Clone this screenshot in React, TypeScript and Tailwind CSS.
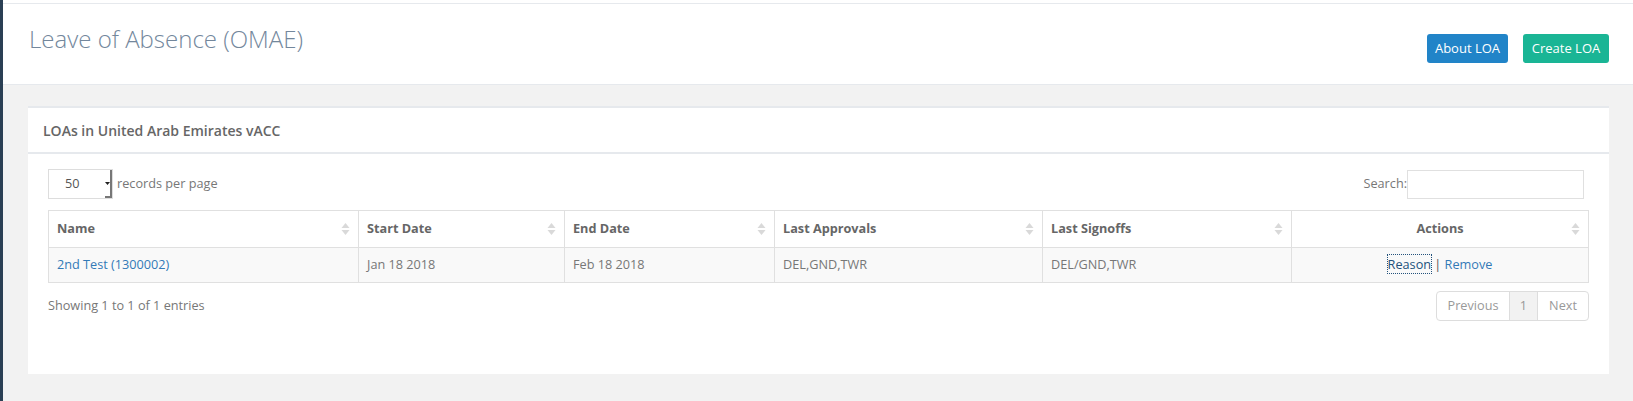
import React from "react";

const SortIcon = () => (
  <svg width="9" height="14" viewBox="0 0 9 14" className="shrink-0">
    <path d="M4.5 1 L8.5 6 L0.5 6 Z" fill="#d9d9d9" />
    <path d="M4.5 13 L8.5 8 L0.5 8 Z" fill="#d9d9d9" />
  </svg>
);

const columns = [
  { label: "Name", w: "w-[310px]" },
  { label: "Start Date", w: "w-[206px]" },
  { label: "End Date", w: "w-[210px]" },
  { label: "Last Approvals", w: "w-[268px]" },
  { label: "Last Signoffs", w: "w-[249px]" },
];

export default function App() {
  return (
    <div
      className="flex w-[1633px] h-[401px] bg-[#f2f2f2] text-[12.7px] text-[#777] overflow-hidden"
      style={{ fontFamily: '"Open Sans", "Liberation Sans", sans-serif' }}
    >
      <div className="w-[3px] bg-[#2A3F54] shrink-0" />
      <div className="flex-1 flex flex-col">
        <div className="h-[4px] bg-white border-b border-[#e6e9ed]" />
        <div className="h-[81px] bg-white border-b border-[#e6e9ed] flex justify-between pl-[26px] pr-[24px]">
          <h3 className="text-[24px] font-light text-[#73879C] mt-[18px] leading-[34px]">
            Leave of Absence (OMAE)
          </h3>
          <div className="flex gap-[15px] mt-[30px]">
            <button className="h-[29px] w-[81px] rounded-[3px] bg-[#2184c8] text-white text-[13px]">
              About LOA
            </button>
            <button className="h-[29px] w-[86px] rounded-[3px] bg-[#1ab595] text-white text-[13px]">
              Create LOA
            </button>
          </div>
        </div>
        <div className="pt-[21px] pl-[25px] pr-[24px]">
          <div className="bg-white border-t-2 border-[#E6E9ED] h-[268px]">
            <div className="h-[46px] border-b-2 border-[#E6E9ED] flex items-center pl-[15px]">
              <h2 className="text-[14px] font-semibold text-[#666]">
                LOAs in United Arab Emirates vACC
              </h2>
            </div>
            <div className="px-[20px] pt-[15px]">
              <div className="flex justify-between items-center">
                <div className="flex items-center">
                  <div className="relative w-[65px] h-[30px] border border-[#dddddd] flex items-center pl-[16px]">
                    <span className="text-[#555]">50</span>
                    <div className="absolute right-0 top-0 bottom-0 w-[7px] border-r-2 border-b-2 border-[#777] flex items-center justify-center">
                      <svg width="5" height="3" viewBox="0 0 5 3">
                        <path d="M0 0 L5 0 L2.5 3 Z" fill="#222" />
                      </svg>
                    </div>
                  </div>
                  <span className="ml-[4px]">records per page</span>
                </div>
                <div className="flex items-center pr-[5px]">
                  <span>Search:</span>
                  <div className="w-[177px] h-[29px] border border-[#e0e0e0]" />
                </div>
              </div>
              <table className="mt-[11px] border-collapse w-[1541px] table-fixed">
                <thead>
                  <tr className="h-[37px]">
                    {columns.map((c) => (
                      <th key={c.label} className={`${c.w} border border-[#e0e0e0] px-[8px] text-left font-bold text-[#666]`}>
                        <div className="flex items-center justify-between">
                          <span>{c.label}</span>
                          <SortIcon />
                        </div>
                      </th>
                    ))}
                    <th className="border border-[#e0e0e0] px-[8px] font-bold text-[#666]">
                      <div className="flex items-center justify-between">
                        <span className="w-[9px]" />
                        <span>Actions</span>
                        <SortIcon />
                      </div>
                    </th>
                  </tr>
                </thead>
                <tbody>
                  <tr className="h-[35px] bg-[#f9f9f9]">
                    <td className="border border-[#e0e0e0] px-[8px]">
                      <span className="text-[#337ab7]">2nd Test (1300002)</span>
                    </td>
                    <td className="border border-[#e0e0e0] px-[8px]">Jan 18 2018</td>
                    <td className="border border-[#e0e0e0] px-[8px]">Feb 18 2018</td>
                    <td className="border border-[#e0e0e0] px-[8px]">DEL,GND,TWR</td>
                    <td className="border border-[#e0e0e0] px-[8px]">DEL/GND,TWR</td>
                    <td className="border border-[#e0e0e0] px-[8px] text-center">
                      <span className="text-[#23527c] outline-1 outline-dotted outline-[#23527c]">Reason</span>
                      <span className="text-[#555]"> | </span>
                      <span className="text-[#337ab7]">Remove</span>
                    </td>
                  </tr>
                </tbody>
              </table>
              <div className="flex justify-between items-center mt-[8px]">
                <span>Showing 1 to 1 of 1 entries</span>
                <div className="flex h-[30px] border border-[#dddddd] rounded-[4px] text-[#999]">
                  <span className="w-[73px] flex items-center justify-center border-r border-[#dddddd]">Previous</span>
                  <span className="w-[28px] flex items-center justify-center border-r border-[#dddddd] bg-[#f2f2f2]">1</span>
                  <span className="w-[50px] flex items-center justify-center">Next</span>
                </div>
              </div>
            </div>
          </div>
        </div>
      </div>
    </div>
  );
}
